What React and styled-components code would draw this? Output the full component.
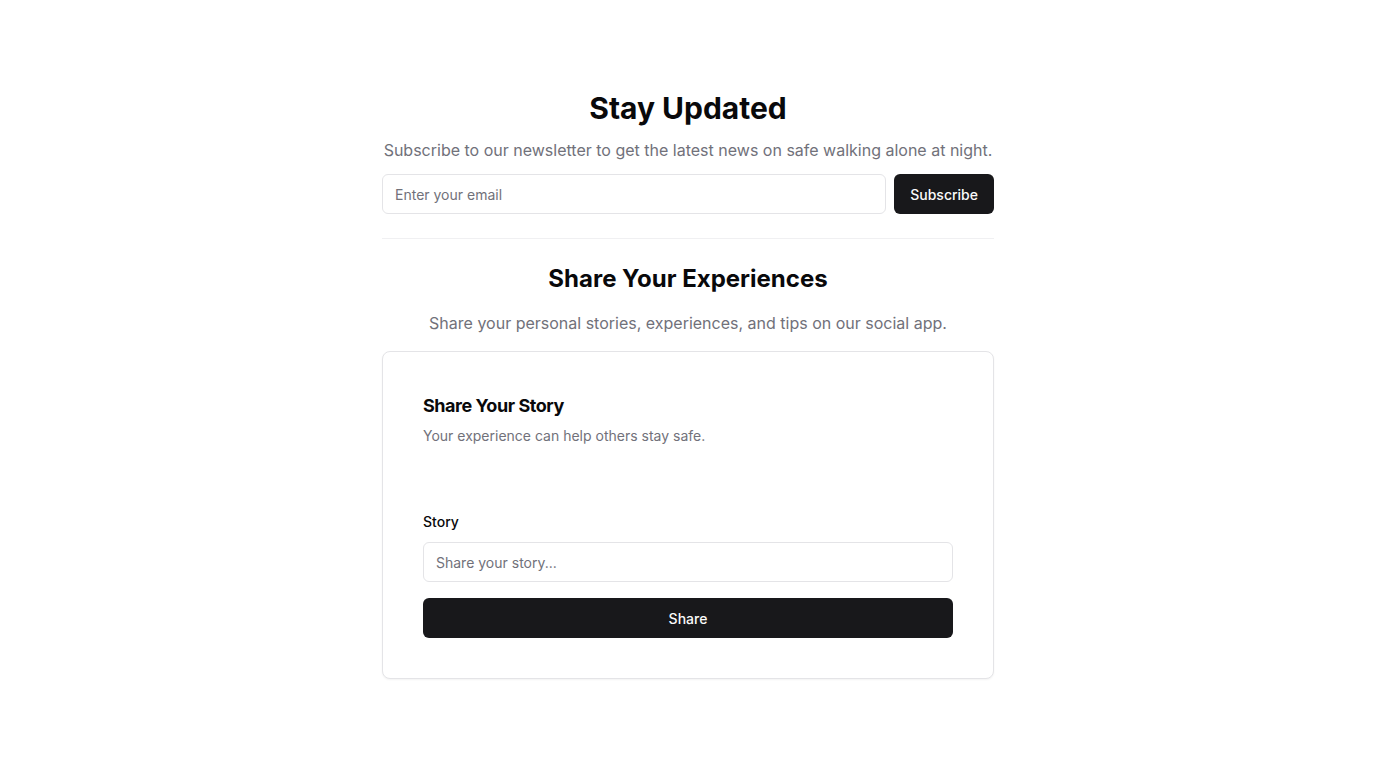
import React from 'react';
import styled, { createGlobalStyle } from 'styled-components';

const GlobalStyle = createGlobalStyle`
  * {
    box-sizing: border-box;
  }

  body {
    margin: 0;
    background: #ffffff;
    font-family: Inter, "Noto Sans", sans-serif;
    color: #09090b;
  }
`;

const Page = styled.main`
  display: flex;
  justify-content: center;
  padding: 90px 16px 40px;
`;

const Column = styled.div`
  width: 612px;
  display: flex;
  flex-direction: column;
`;

const Section = styled.section`
  display: flex;
  flex-direction: column;
  align-items: stretch;
  text-align: center;
`;

const Title = styled.h2`
  margin: 0;
  font-size: ${({ $size }) => $size}px;
  line-height: ${({ $lh }) => $lh}px;
  font-weight: 700;
  color: #09090b;
`;

const Lead = styled.p`
  margin: ${({ $top }) => $top}px 0 0;
  font-size: 16px;
  line-height: 24px;
  color: #71717a;
`;

const InlineForm = styled.form`
  display: flex;
  gap: 8px;
  margin-top: 12px;
`;

const Input = styled.input`
  flex: ${({ $grow }) => ($grow ? '1' : 'none')};
  width: 100%;
  height: 40px;
  padding: 0 12px;
  border: 1px solid #e4e4e7;
  border-radius: 6px;
  background: #ffffff;
  font-family: inherit;
  font-size: 14px;
  color: #09090b;
  outline: none;

  &::placeholder {
    color: #71717a;
  }
`;

const Button = styled.button`
  height: 40px;
  padding: 0 16px;
  border: none;
  border-radius: 6px;
  background: #18181b;
  color: #fafafa;
  font-family: inherit;
  font-size: 14px;
  font-weight: 500;
  cursor: pointer;
  width: ${({ $block }) => ($block ? '100%' : 'auto')};
`;

const Divider = styled.hr`
  margin: 24px 0;
  border: none;
  border-top: 1px solid #f0f0f2;
`;

const Card = styled.div`
  margin-top: 16px;
  border: 1px solid #e4e4e7;
  border-radius: 8px;
  background: #ffffff;
  box-shadow: 0 1px 2px rgba(0, 0, 0, 0.05);
  padding: 40px;
  text-align: left;
`;

const CardHeader = styled.div`
  display: flex;
  flex-direction: column;
  gap: 6px;
`;

const CardTitle = styled.h3`
  margin: 0;
  font-size: 18px;
  line-height: 28px;
  font-weight: 700;
  letter-spacing: -0.025em;
`;

const CardDescription = styled.p`
  margin: 0;
  font-size: 14px;
  line-height: 20px;
  color: #71717a;
`;

const StoryForm = styled.form`
  display: flex;
  flex-direction: column;
  margin-top: 66px;
`;

const Field = styled.div`
  display: flex;
  flex-direction: column;
  gap: 10px;
  margin-bottom: 16px;
`;

const Label = styled.label`
  font-size: 14px;
  line-height: 20px;
  font-weight: 500;
  color: #09090b;
`;

export default function App() {
  return (
    <>
      <GlobalStyle />
      <Page>
        <Column>
          <Section>
            <Title $size={30} $lh={36}>Stay Updated</Title>
            <Lead $top={12}>
              Subscribe to our newsletter to get the latest news on safe walking alone at night.
            </Lead>
            <InlineForm onSubmit={(e) => e.preventDefault()}>
              <Input $grow type="email" placeholder="Enter your email" />
              <Button type="submit">Subscribe</Button>
            </InlineForm>
          </Section>

          <Divider />

          <Section>
            <Title $size={24} $lh={32}>Share Your Experiences</Title>
            <Lead $top={16}>
              Share your personal stories, experiences, and tips on our social app.
            </Lead>
            <Card>
              <CardHeader>
                <CardTitle>Share Your Story</CardTitle>
                <CardDescription>Your experience can help others stay safe.</CardDescription>
              </CardHeader>
              <StoryForm onSubmit={(e) => e.preventDefault()}>
                <Field>
                  <Label htmlFor="story">Story</Label>
                  <Input id="story" placeholder="Share your story..." />
                </Field>
                <Button type="submit" $block>Share</Button>
              </StoryForm>
            </Card>
          </Section>
        </Column>
      </Page>
    </>
  );
}
